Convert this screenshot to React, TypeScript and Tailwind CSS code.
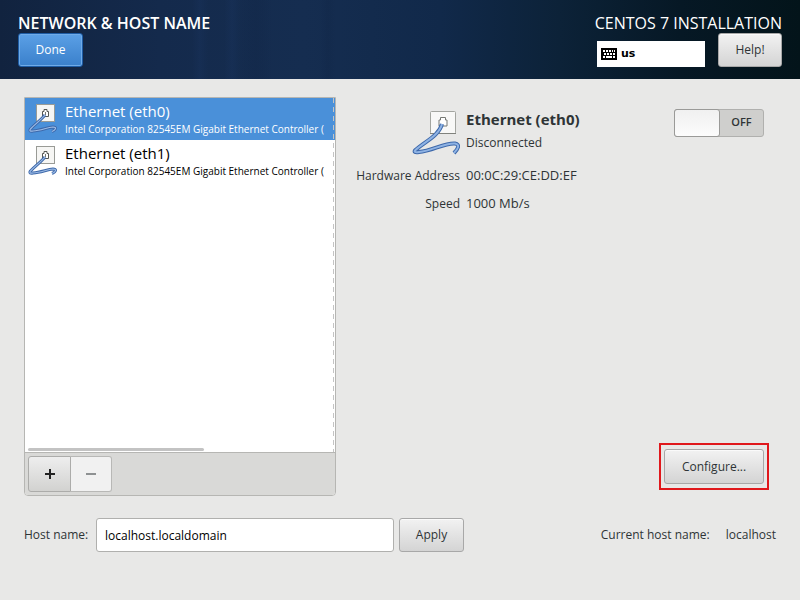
import { useState } from "react";

const devices = [
  { id: "eth0", name: "Ethernet (eth0)", detail: "Intel Corporation 82545EM Gigabit Ethernet Controller (" },
  { id: "eth1", name: "Ethernet (eth1)", detail: "Intel Corporation 82545EM Gigabit Ethernet Controller (" },
];

const greyButton =
  "rounded-[3px] border border-[#a8a8a8] bg-linear-to-b from-[#f2f2f2] to-[#d4d4d4] text-[#2e3436] shadow-[inset_0_1px_0_#fafafa]";

const largeCable =
  "M30 15C27 27 12 33 3.5 41C1.5 43 3 43.5 7 43C20 42 33 33.5 43 34.5C48.500 35.500 46 40 42 44";
const smallCable = "M18 12C14 17 8 21 3.500 26C2 28 3.500 28.500 6 28C14 27.500 20 24.500 26 24C30 24 29 27 25 28.500";

function WiredIcon({ className }: { className: string }) {
  return (
    <svg viewBox="0 0 48 48" className={className} aria-hidden="true">
      <rect x="18.5" y="2.500" width="25" height="22" rx="1" fill="#f8f8f7" stroke="#a3a5a0" />
      <path d="M18 24.500h26" stroke="#80827d" />
      <path d="M27 17v-6h1.500V8.500h5V11H35v6z" fill="#fff" stroke="#777974" />
      <path d={largeCable} fill="none" stroke="#3d68aa" strokeWidth="4" strokeLinejoin="round" />
      <path d={largeCable} fill="none" stroke="#8fb3e4" strokeWidth="2" strokeLinejoin="round" />
    </svg>
  );
}

function SmallWiredIcon() {
  return (
    <svg viewBox="0 0 32 32" className="size-8 shrink-0" aria-hidden="true">
      <rect x="9.500" y="1.500" width="18" height="17" fill="#f6f6f4" stroke="#999b96" />
      <path d="M15.500 13.500v-5h1.500V6.500h3v2h1.500v5z" fill="#fff" stroke="#555753" />
      <path d="M18.500 9v3" stroke="#777974" />
      <path d={smallCable} fill="none" stroke="#3d68aa" strokeWidth="3" strokeLinejoin="round" />
      <path d={smallCable} fill="none" stroke="#9dbce6" strokeWidth="1.200" strokeLinejoin="round" />
    </svg>
  );
}

function KeyboardIcon() {
  return (
    <svg viewBox="0 0 16 12" className="h-3 w-4" aria-hidden="true" shapeRendering="crispEdges">
      <rect width="16" height="12" rx="1" fill="#000" />
      <path
        d="M2 2h2v2H2zM5 2h2v2H5zM8 2h2v2H8zM11 2h1v2h-1zM13 2h1v2h-1zM3 5h2v2H3zM6 5h2v2H6zM9 5h2v2H9zM12 5h2v2h-2zM2 8h2v2H2zM5 8h6v2H5zM12 8h2v2h-2z"
        fill="#fff"
      />
    </svg>
  );
}

export default function App() {
  const [selected, setSelected] = useState("eth0");
  const [on, setOn] = useState(false);
  const [host, setHost] = useState("localhost.localdomain");
  const device = devices.find((d) => d.id === selected) ?? devices[0];

  return (
    <div className="flex min-h-screen flex-col bg-[#e8e8e7] font-['Open_Sans','Noto_Sans',sans-serif] text-[12px] leading-5 text-[#2e3436]">
      <header className="flex h-[79px] items-start justify-between bg-[linear-gradient(90deg,transparent_24%,#1d3a6b33_25%,transparent_26%,transparent_28%,#1d3a6b33_29%,transparent_30%,#0b1c3a22_32%,transparent_34%,transparent_40%,#0b1c3a22_41%,transparent_42%),linear-gradient(90deg,#11233f_0%,#142a4c_20%,#152d50_38%,#11294a_55%,#0c2238_70%,#061825_85%,#03141a_100%)] px-[18px] pt-[13px]">
        <div>
          <h1 className="text-[16px] leading-5 font-semibold text-white">NETWORK &amp; HOST NAME</h1>
          <button className="h-[34px] w-[65px] rounded-[3px] border border-[#1f5da5] bg-linear-to-b from-[#5ba0e6] to-[#3a80cb] text-white shadow-[inset_0_0_0_1px_#6fabe8]">
            Done
          </button>
        </div>
        <div className="flex flex-col items-end">
          <p className="text-[16px] leading-5 text-white">CENTOS 7 INSTALLATION</p>
          <div className="flex w-[185px] items-end justify-between">
            <button className="flex h-[26px] w-[108px] items-center gap-1 bg-white pl-1 font-['DejaVu_Sans',sans-serif] text-[11px] font-bold text-black">
              <KeyboardIcon />
              us
            </button>
            <button className={`h-[34px] w-16 ${greyButton}`}>Help!</button>
          </div>
        </div>
      </header>

      <main className="flex flex-1 flex-col px-6 pt-[18px] pb-12">
        <div className="flex flex-1 gap-[18px]">
          <section className="flex w-[312px] shrink-0 flex-col overflow-hidden rounded-b-[4px] border border-[#b6b6b3] bg-white">
            <div className="relative flex-1">
              <ul>
                {devices.map((d) => (
                  <li key={d.id}>
                    <button
                      onClick={() => setSelected(d.id)}
                      className={`flex h-[42px] w-full items-center gap-[6px] pl-[2px] text-left ${
                        d.id === selected ? "bg-[#4a90d9] text-white" : "text-black"
                      }`}
                    >
                      <SmallWiredIcon />
                      <span className="whitespace-nowrap">
                        <span className="block text-[15px] leading-5">{d.name}</span>
                        <span className="block text-[10px] leading-4">{d.detail}</span>
                      </span>
                    </button>
                  </li>
                ))}
              </ul>
              <div className="absolute inset-y-0 right-px w-px bg-[repeating-linear-gradient(180deg,#c4c4c4_0px,#c4c4c4_5px,transparent_5px,transparent_9px)]" />
              <div className="absolute bottom-px left-[3px] h-[3px] w-[176px] rounded-full bg-[#c3c3c3]" />
            </div>
            <div className="flex h-[43px] items-start border-t border-[#b6b6b3] bg-[#d9d9d7] p-[3px]">
              <button
                aria-label="Add device"
                className="flex h-9 w-[43px] items-center justify-center rounded-l-[3px] border border-[#acacaa] bg-linear-to-b from-[#eeeeee] to-[#d2d2d0]"
              >
                <svg viewBox="0 0 10 10" className="size-[10px]" aria-hidden="true">
                  <path d="M4 0h2v4h4v2H6v4H4V6H0V4h4z" fill="#222" />
                </svg>
              </button>
              <button
                aria-label="Remove device"
                disabled
                className="flex h-9 w-[41px] items-center justify-center rounded-r-[3px] border border-l-0 border-[#b8b8b6] bg-[#f1f1f1]"
              >
                <svg viewBox="0 0 10 10" className="size-[10px]" aria-hidden="true">
                  <path d="M0 4h10v2H0z" fill="#8e9192" />
                </svg>
              </button>
            </div>
          </section>

          <section className="flex min-w-0 flex-1 flex-col justify-between">
            <div className="flex items-start justify-between pt-3 pr-3">
              <div className="grid grid-cols-[106px_auto] items-baseline gap-x-[6px]">
                <WiredIcon className="size-12 self-start justify-self-end" />
                <div className="self-start">
                  <h2 className="text-[15px] leading-5 font-bold">{device.name}</h2>
                  <p className="pt-1 leading-5">Disconnected</p>
                </div>
                <span className="pt-2 text-right whitespace-nowrap">Hardware Address</span>
                <span className="pt-2 text-[13px]">00:0C:29:CE:DD:EF</span>
                <span className="pt-[7px] text-right">Speed</span>
                <span className="pt-[7px] text-[13px]">1000 Mb/s</span>
              </div>
              <button
                role="switch"
                aria-checked={on}
                aria-label="Device connection"
                onClick={() => setOn(!on)}
                className={`flex h-7 w-[90px] rounded-[3px] border border-[#b0b0ae] bg-[#cfcfcd] text-[11px] font-semibold ${on ? "flex-row-reverse" : ""}`}
              >
                <span className="-my-px -ml-px h-7 w-[46px] rounded-[3px] border border-[#9a9a98] bg-linear-to-b from-[#f0f0f0] to-[#fcfcfc]" />
                <span className="flex-1 text-center leading-6">{on ? "ON" : "OFF"}</span>
              </button>
            </div>
            <div className="mr-[7px] mb-[6px] self-end border-2 border-[#e0181c] px-[3px] py-1">
              <button className={`block h-[35px] w-[100px] ${greyButton}`}>Configure...</button>
            </div>
          </section>
        </div>

        <footer className="mt-[22px] flex items-center">
          <label htmlFor="host" className="w-[72px] whitespace-nowrap">
            Host name:
          </label>
          <input
            id="host"
            value={host}
            onChange={(e) => setHost(e.target.value)}
            className="h-[34px] w-[298px] rounded-[3px] border border-[#b0b0ae] bg-white px-2 text-black"
          />
          <button className={`ml-[5px] h-[34px] w-[65px] ${greyButton}`}>Apply</button>
          <p className="ml-auto flex gap-4 whitespace-nowrap">
            <span>Current host name:</span>
            <span>localhost</span>
          </p>
        </footer>
      </main>
    </div>
  );
}
